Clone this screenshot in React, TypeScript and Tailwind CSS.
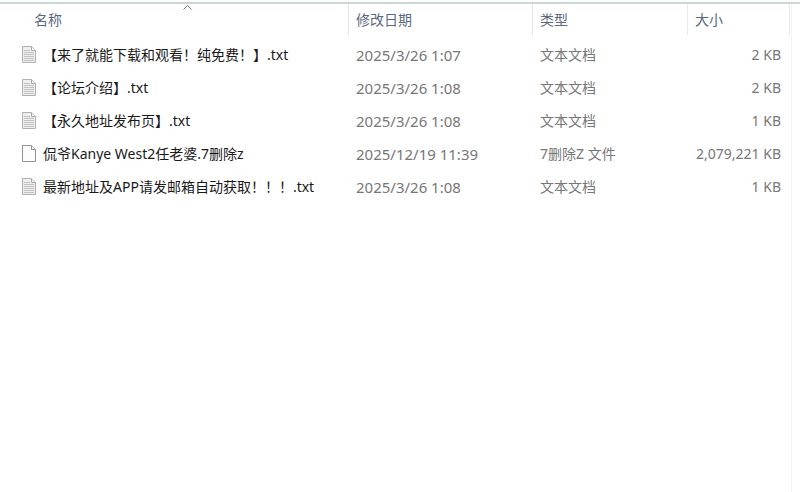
import React, { useState } from 'react';

interface FileItem {
    name: string;
    modified: string;
    type: string;
    size: number;
    isText: boolean;
}

const FILES: FileItem[] = [
    { name: '【来了就能下载和观看！纯免费！】.txt', modified: '2025/3/26 1:07', type: '文本文档', size: 2, isText: true },
    { name: '【论坛介绍】.txt', modified: '2025/3/26 1:08', type: '文本文档', size: 2, isText: true },
    { name: '【永久地址发布页】.txt', modified: '2025/3/26 1:08', type: '文本文档', size: 1, isText: true },
    { name: '侃爷Kanye West2任老婆.7删除z', modified: '2025/12/19 11:39', type: '7删除Z 文件', size: 2079221, isText: false },
    { name: '最新地址及APP请发邮箱自动获取！！！.txt', modified: '2025/3/26 1:08', type: '文本文档', size: 1, isText: true },
];

const FileIcon = ({ isText }: { isText: boolean }) => (
    <svg className="h-[17px] w-[14px] shrink-0" viewBox="0 0 14 17" fill="none" aria-hidden="true">
        <path
            d="M.5.5h9l4 4v12H.5z"
            fill={isText ? '#eeeeee' : '#fdfdfd'}
            stroke={isText ? '#b0b0b0' : '#929292'}
        />
        <path d="M9.5.8v3.7h3.8" fill="#fff" stroke={isText ? '#a8a8a8' : '#929292'} />
        {isText && (
            <path d="M2 4.5h6M2 6.5h10M2 8.5h10M2 10.5h10M2 12.5h10M2 14.5h10" stroke="#c2c2c2" />
        )}
    </svg>
);

const HeaderCell = ({
    label,
    className = '',
    sorted,
    ascending,
    onClick
}: {
    label: string;
    className?: string;
    sorted?: boolean;
    ascending?: boolean;
    onClick?: () => void;
}) => (
    <th scope="col" className="p-0 pb-[3px] font-normal">
        <button
            type="button"
            onClick={onClick}
            className={`relative flex h-[31px] w-full items-center border-r border-[#e4eaec] text-left text-[#5b6880] ${className}`}
        >
            {label}
            {sorted && (
                <svg
                    className={`absolute left-[183px] top-px h-[5px] w-[9px] ${ascending ? '' : 'rotate-180'}`}
                    viewBox="0 0 9 5"
                    fill="none"
                    aria-hidden="true"
                >
                    <path d="M.5 4.5l4-4 4 4" stroke="#6f7678" />
                </svg>
            )}
        </button>
    </th>
);

export default function App() {
    const [ascending, setAscending] = useState(true);
    const files = ascending ? FILES : [...FILES].reverse();

    return (
        <div className="min-h-screen bg-white pt-0.5 font-['Noto_Sans','Noto_Sans_CJK_SC',sans-serif] text-sm">
            <div className="flex min-h-[calc(100vh-2px)] border-t-2 border-[#c8d8d5] pr-2">
                <div className="flex-1 border-r border-[#f1f3f4] pr-px">
                    <table className="w-full table-fixed border-collapse whitespace-nowrap">
                        <colgroup>
                            <col />
                            <col className="w-[184px]" />
                            <col className="w-[155px]" />
                            <col className="w-[102px]" />
                        </colgroup>
                        <thead>
                            <tr>
                                <HeaderCell
                                    label="名称"
                                    className="pl-[34px]"
                                    sorted
                                    ascending={ascending}
                                    onClick={() => setAscending(!ascending)}
                                />
                                <HeaderCell label="修改日期" className="pl-[7px]" />
                                <HeaderCell label="类型" className="pl-[7px]" />
                                <HeaderCell label="大小" className="pl-[7px]" />
                            </tr>
                        </thead>
                        <tbody>
                            {files.map((file) => (
                                <tr key={file.name} className="h-[33px] text-[#777777]">
                                    <td className="p-0 pl-[22px] text-[#1a1a1a]">
                                        <div className="flex items-center gap-[7px]">
                                            <FileIcon isText={file.isText} />
                                            <span>{file.name}</span>
                                        </div>
                                    </td>
                                    <td className="p-0 pl-[7px] text-[15px] leading-5">{file.modified}</td>
                                    <td className="p-0 pl-[7px]">{file.type}</td>
                                    <td className="p-0 pr-[9px] text-right">{file.size.toLocaleString('en-US')} KB</td>
                                </tr>
                            ))}
                        </tbody>
                    </table>
                </div>
            </div>
        </div>
    );
}
